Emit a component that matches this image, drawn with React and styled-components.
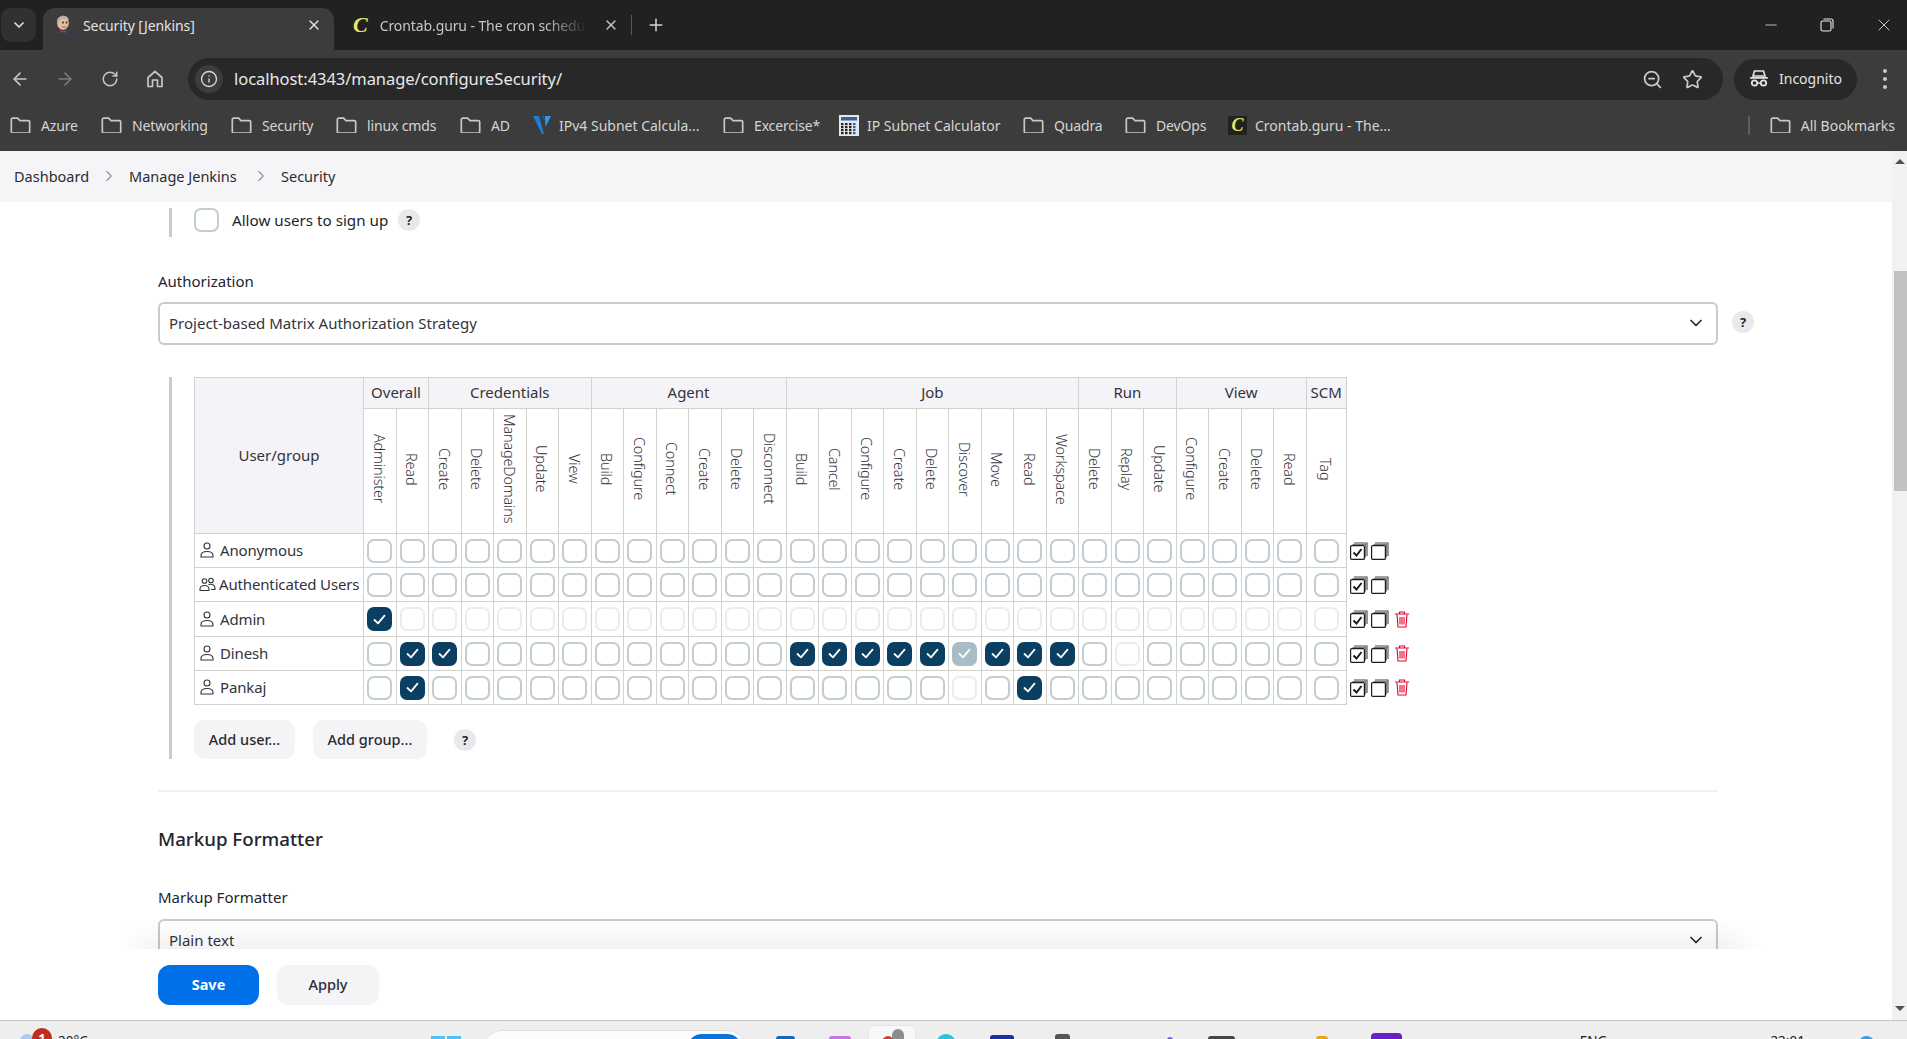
import React from 'react';
import styled, { createGlobalStyle } from 'styled-components';
import { ArrowLeft, ArrowRight, RotateCw, Info, ZoomOut, Star, X, Plus, ChevronDown, ChevronRight, Minus } from 'lucide-react';

const Global = createGlobalStyle`
  html, body { margin: 0; padding: 0; height: 100%; overflow: hidden; background: #fff; }
  * { box-sizing: border-box; }
  body { font-family: "Noto Sans", "Open Sans", sans-serif; color: #2b2b33; }
`;

const Shell = styled.div`height: 1039px; width: 1907px; display: flex; flex-direction: column; overflow: hidden;`;

/* browser chrome */
const TabBar = styled.div`height: 50px; background: #202221; display: flex; align-items: flex-end; flex: none; color: #e3e3e3; font-size: 14px;`;
const TabMenu = styled.div`width: 35px; height: 34px; margin: 0 7px 8px 1px; border-radius: 10px; background: #303231; display: flex; align-items: center; justify-content: center; flex: none;`;
const ActiveTab = styled.div`width: 291px; height: 42px; background: #3c3c3c; border-radius: 12px 12px 0 0; display: flex; align-items: center; padding: 0 12px 8px 11px; flex: none;`;
const InactiveTab = styled.div`width: 297px; height: 42px; display: flex; align-items: center; padding: 0 12px 8px 19px; flex: none; color: #c7c7c7;`;
const TabTitle = styled.span`flex: 1; margin-left: ${p => p.$gap}px; white-space: nowrap; overflow: hidden; letter-spacing: -0.1px; ${p => p.$fade ? 'mask-image: linear-gradient(90deg, #000 78%, transparent 98%); -webkit-mask-image: linear-gradient(90deg, #000 78%, transparent 98%);' : ''}`;
const TabSep = styled.div`width: 1px; height: 20px; background: #5a5a5a; margin: 0 14px 15px 0; flex: none; align-self: flex-end;`;
const NewTab = styled.div`display: flex; margin-bottom: 15px; flex: none; color: #d5d5d5;`;
const WinControls = styled.div`margin-left: auto; display: flex; align-items: center; height: 50px; color: #e8e8e8; padding-right: 13px; gap: 40px;`;

const Toolbar = styled.div`height: 50px; background: #3c3c3c; flex: none; display: flex; align-items: center; padding: 8px 0 0 8px; color: #c7c7c7;`;
const NavBtn = styled.div`width: 24px; height: 24px; margin-right: 21px; display: flex; align-items: center; justify-content: center; color: ${p => p.$dim ? '#7b7b7b' : '#c7c7c7'}; flex: none;`;
const AddressBar = styled.div`width: 1535px; height: 42px; border-radius: 21px; background: #282828; display: flex; align-items: center; padding: 0 20px 0 7px; flex: none;`;
const InfoBadge = styled.div`width: 28px; height: 28px; border-radius: 50%; background: #3c3c3c; display: flex; align-items: center; justify-content: center; color: #d8d8d8; flex: none;`;
const Url = styled.span`margin-left: 11px; font-size: 16.5px; color: #e8e8e8; letter-spacing: -0.05px; flex: 1; padding-bottom: 2px;`;
const AddressIcons = styled.div`display: flex; align-items: center; gap: 19px; color: #c7c7c7;`;
const IncognitoPill = styled.div`width: 123px; height: 41px; margin-left: 11px; border-radius: 21px; background: #282828; display: flex; align-items: center; padding: 0 0 1px 15px; gap: 10px; font-size: 14px; color: #e3e3e3; flex: none;`;
const Kebab = styled.div`margin-left: 26px; display: flex; flex-direction: column; gap: 4px; flex: none;`;
const KebabDot = styled.i`width: 4px; height: 4px; border-radius: 50%; background: #c7c7c7; display: block;`;

const Bookmarks = styled.div`height: 51px; background: #3c3c3c; flex: none; display: flex; align-items: center; padding: 0 12px 1px 10px; font-size: 14px; color: #d5d5d5; letter-spacing: -0.15px;`;
const Bookmark = styled.div`display: flex; align-items: center; gap: ${p => p.$gap ?? 10}px; white-space: nowrap; flex: none; width: ${p => p.$w}px; ${p => p.$wide ? 'letter-spacing: 0;' : ''}`;
const BookmarkSep = styled.div`width: 2px; height: 19px; background: #5e5e5e; margin-left: auto; margin-right: 20px; flex: none;`;
const Favicon = styled.div`width: 19px; height: 19px; background: #20221b; display: flex; align-items: center; justify-content: center; flex: none;`;
const CLetter = styled.span`font-family: "Liberation Serif", serif; font-style: italic; font-weight: 700; color: #e9e66a; font-size: ${p => p.$size}px; line-height: 1; letter-spacing: 0;`;

/* page */
const Middle = styled.div`flex: 1; min-height: 0; display: flex;`;
const Page = styled.div`flex: 1; min-width: 0; display: flex; flex-direction: column; background: #fff;`;
const Breadcrumb = styled.nav`height: 51px; background: #f5f5f7; flex: none; display: flex; align-items: center; padding: 0 0 2px 14px; font-size: 14.5px; color: #2b2b33; font-weight: 400;`;
const Crumb = styled.span`width: ${p => p.$w}px; white-space: nowrap;`;
const CrumbSep = styled.span`display: flex; color: #8f8f97; width: 40px; justify-content: center; flex: none;`;
const Content = styled.div`flex: 1; min-height: 0; overflow: hidden; padding-left: 158px;`;
const Form = styled.div`width: 1596px;`;
const SignupIndent = styled.div`margin: 6px 0 0 11px; height: 29px; border-left: 3px solid #c3ced4; padding: 0 0 5px 22px; display: flex; align-items: center;`;
const SignupLabel = styled.span`margin-left: 13px; padding-bottom: 1px; font-size: 15.2px; font-weight: 400; color: #24242c; width: 166px; white-space: nowrap;`;
const Help = styled.span`width: 22px; height: 22px; margin-top: ${p => p.$mt ?? 0}px; border-radius: 50%; background: #e9e9ec; color: #26262e; font-size: 13px; font-weight: 700; display: flex; align-items: center; justify-content: center; flex: none;`;
const FieldLabel = styled.div`font-size: 15px; font-weight: 400; line-height: 18px; height: ${p => p.$h ?? 20}px; margin-top: ${p => p.$mt}px; color: #24242c;`;
const SelectRow = styled.div`display: flex; align-items: center; gap: 14px; margin-top: 10px; padding-right: ${p => p.$pr ?? 0}px;`;
const Select = styled.div`flex: 1; height: 43px; border: 2px solid #c1ccd3; border-radius: 6px; display: flex; align-items: center; justify-content: space-between; padding: 0 10px 2px 9px; font-size: 15px; color: #33333b; background: #fff;`;
const MatrixIndent = styled.div`margin: 32px 0 0 11px; border-left: 3px solid #c3ced4; padding-left: 22px;`;
const Matrix = styled.table`border-collapse: collapse; table-layout: fixed; width: 1210px; font-size: 15px; color: #33333b;`;
const GroupHead = styled.th`height: 31px; background: #f3f3f8; border: 1px solid #d2d2ce; font-weight: 400; font-size: 15px; padding: 0 0 2px; text-align: center;`;
const UserHead = styled(GroupHead)`padding-bottom: 2px;`;
const PermHead = styled.th`height: 125px; border: 1px solid #d2d2ce; font-weight: 300; font-size: 14.5px; padding: 0; vertical-align: middle;`;
const PermText = styled.span`writing-mode: vertical-rl; display: inline-block; white-space: nowrap; letter-spacing: -0.2px; line-height: 18px;`;
const Row = styled.tr`height: ${p => p.$h}px;`;
const NameCell = styled.td`border: 1px solid #d2d2ce; padding: 0 0 0 ${p => p.$pl}px; white-space: nowrap; overflow: hidden;`;
const NameInner = styled.div`display: flex; align-items: center; gap: ${p => p.$gap}px; letter-spacing: -0.15px; line-height: 18px; padding-bottom: 1px;`;
const BoxCell = styled.td`border: 1px solid #d2d2ce; padding: 0; text-align: center;`;
const ActionCell = styled.td`padding: 0 0 0 3px;`;
const Actions = styled.div`display: flex; align-items: center; gap: 3px;`;
const boxColors = {
  off: 'background:#fff;border:2px solid #c2ccd3;',
  dis: 'background:#fff;border:2px solid #e9edf1;',
  on: 'background:#0b3f61;border:2px solid #0b3f61;',
  ondis: 'background:#a9bcc7;border:2px solid #a9bcc7;',
};
const Box = styled.span`width: 25px; height: 24px; border-radius: 7px; display: inline-flex; align-items: center; justify-content: center; vertical-align: middle; flex: none; ${p => boxColors[p.$state]}`;
const ButtonRow = styled.div`display: flex; align-items: center; margin-top: 15px; height: 39px;`;
const SoftButton = styled.div`width: ${p => p.$w}px; height: ${p => p.$h ?? 39}px; margin-left: ${p => p.$ml ?? 0}px; padding-bottom: 2px; background: #f4f4f6; border-radius: 11px; display: flex; align-items: center; justify-content: center; font-size: 14.5px; font-weight: 500; color: #2b2b33; flex: none;`;
const HelpGap = styled.span`margin-left: 27px; display: flex;`;
const Divider = styled.div`height: 2px; background: #f2f2f6; margin: 31px 36px 0 0;`;
const Heading = styled.h2`margin: 35px 0 0; font-size: 18.7px; line-height: 24px; height: 26px; font-weight: 500; color: #24242c;`;

const SaveBar = styled.div`position: relative; height: 71px; flex: none; background: #fff; display: flex; padding: 16px 0 0 158px; gap: 18px;
  &::before { content: ""; position: absolute; left: 120px; right: 130px; top: -30px; height: 30px; background: linear-gradient(180deg, rgba(0,0,0,0), rgba(0,0,0,.05)); pointer-events: none;
    mask-image: linear-gradient(90deg, transparent, #000 40px, #000 calc(100% - 40px), transparent); -webkit-mask-image: linear-gradient(90deg, transparent, #000 40px, #000 calc(100% - 40px), transparent); }
`;
const SaveButton = styled.div`width: 101px; height: 40px; padding-bottom: 2px; border-radius: 12px; background: #0070e8; color: #fff; font-weight: 700; font-size: 14.5px; display: flex; align-items: center; justify-content: center;`;

const ScrollTrack = styled.div`width: 15px; flex: none; background: #f1f1f1; display: flex; flex-direction: column; align-items: flex-end; padding-top: 8px;`;
const ArrowUp = styled.i`width: 0; height: 0; border-left: 5px solid transparent; border-right: 5px solid transparent; border-bottom: 5px solid #505050; margin-right: 2px; flex: none; display: block;`;
const ArrowDown = styled.i`width: 0; height: 0; border-left: 5px solid transparent; border-right: 5px solid transparent; border-top: 5px solid #505050; margin: auto 2px 9px 0; flex: none; display: block;`;
const Thumb = styled.div`width: 13px; height: 220px; background: #c1c1c1; margin-top: 107px; flex: none;`;

/* taskbar */
const Taskbar = styled.div`height: 19px; flex: none; background: #eeeeee; border-top: 1px solid #c4c4c4; display: flex; align-items: flex-start; overflow: hidden;`;
const TaskItem = styled.div`width: ${p => p.$w}px; height: 30px; margin-left: ${p => p.$ml}px; margin-top: ${p => p.$top}px; background: ${p => p.$color}; border-radius: ${p => p.$r ?? 3}px; flex: none;`;
const Badge = styled.div`width: 20px; height: 20px; border-radius: 50%; background: #c42b1c; color: #fff; font-size: 13px; font-weight: 700; text-align: center; line-height: 20px; margin: 7px 0 0 -2px; flex: none;`;
const TaskText = styled.span`font-size: 13.5px; color: #222; margin-left: ${p => p.$ml}px; margin-top: ${p => p.$top}px; white-space: nowrap; flex: none; line-height: 18px;`;
const WinLogo = styled.div`display: flex; gap: 2px; margin: 15px 0 0 343px; flex: none;`;
const WinPane = styled.i`width: 14px; height: 14px; background: #4cc2ff; display: block;`;
const SearchBox = styled.div`width: 265px; height: 40px; margin: 9px 0 0 21px; background: #fbfbfb; border: 1px solid #e0e0e0; border-radius: 20px; flex: none; display: flex; justify-content: flex-end; padding: 3px 4px 0 0;`;
const SearchPill = styled.i`width: 55px; height: 30px; background: #0a74da; border-radius: 15px; display: block;`;
const ActiveTile = styled.div`width: 48px; height: 40px; margin: 4px 0 0 17px; background: #f8f8f8; border: 1px solid #e6e6e6; border-radius: 5px; flex: none; display: flex; justify-content: center; padding-top: 3px;`;
const TileRed = styled.i`width: 16px; height: 24px; border-radius: 50%; background: #d93a2b; margin-top: 7px; display: block;`;
const TileGray = styled.i`width: 12px; height: 24px; border-radius: 6px 6px 0 0; background: #8c8c8c; margin-left: -4px; display: block;`;

const Folder = ({ size = 21 }) => (
  <svg width={size} height={size * 0.8} viewBox="0 0 21 17" fill="none" stroke="#c8c8c8" strokeWidth="1.7" style={{ flex: 'none' }}>
    <path d="M1.2 2.6a1.4 1.4 0 0 1 1.4-1.4h5l2.3 2.4h8.5a1.4 1.4 0 0 1 1.4 1.4v10a1.4 1.4 0 0 1-1.4 1.4H2.6a1.4 1.4 0 0 1-1.4-1.4z" />
  </svg>
);
const Jenkins = () => (
  <svg width="18" height="20" viewBox="0 0 18 20" style={{ flex: 'none' }}>
    <path d="M1 20c0-4 2-6 4-6h8c2 0 4 2 4 6z" fill="#2f3f52" />
    <ellipse cx="9" cy="8" rx="6.200" ry="7.200" fill="#e2bda0" stroke="#4a3a30" strokeWidth=".7" />
    <path d="M3 7C3 3 6 .8 9.500 .8c3 0 5 2 5.500 4.500-3-2-8-2-9 0-.8 1.500-1 3-2.500 1.700z" fill="#b9b2a8" />
    <circle cx="9" cy="7.500" r=".9" fill="#222" /><circle cx="12.500" cy="7.500" r=".9" fill="#222" />
    <path d="M8 11.500c1.500 1 3 1 4.500 0" stroke="#8d5a44" strokeWidth=".9" fill="none" />
    <path d="M6 15l3 1.500 3-1.500v3l-3-1-3 1z" fill="#d7252b" />
  </svg>
);
const Home = () => (
  <svg width="20" height="20" viewBox="0 0 20 20" fill="none" stroke="#c7c7c7" strokeWidth="1.7">
    <path d="M3 8.500 10 2.500l7 6V17.500h-4.500V11h-5v6.500H3z" strokeLinejoin="round" />
  </svg>
);
const Incognito = () => (
  <svg width="20" height="18" viewBox="0 0 20 18" fill="#e3e3e3" style={{ flex: 'none' }}>
    <path d="M5.500 1h9l1.500 5H4z" fill="none" stroke="#e3e3e3" strokeWidth="1.600" />
    <rect x="1" y="7" width="18" height="1.800" rx=".9" />
    <circle cx="5.500" cy="13" r="2.700" fill="none" stroke="#e3e3e3" strokeWidth="1.800" />
    <circle cx="14.500" cy="13" r="2.700" fill="none" stroke="#e3e3e3" strokeWidth="1.800" />
    <path d="M8.200 13h3.600" stroke="#e3e3e3" strokeWidth="1.500" />
  </svg>
);
const Restore = () => (
  <svg width="14" height="14" viewBox="0 0 14 14" fill="none" stroke="#e8e8e8" strokeWidth="1.100">
    <rect x="1" y="3" width="10" height="10" rx="1.800" />
    <path d="M3.500 1h7.500a2 2 0 0 1 2 2v7.500" />
  </svg>
);
const VLogo = () => (
  <svg width="20" height="20" viewBox="0 0 20 20" style={{ flex: 'none' }}>
    <path d="M1 1h6l5 18h-2z" fill="#1c7fd9" />
    <path d="M8.500 1H12l1.500 5z" fill="#0f5fb0" />
    <path d="M13 1h6l-5.500 11z" fill="#2f9bf0" />
  </svg>
);
const Calc = () => (
  <svg width="20" height="21" viewBox="0 0 20 21" style={{ flex: 'none' }}>
    <rect width="20" height="21" fill="#e8e8e8" />
    <rect x="2" y="2" width="16" height="3.500" fill="#2f64a8" />
    {[8, 11, 14, 17].flatMap(y => [2, 6, 10, 14].map(x => (
      <rect key={`${x}-${y}`} x={x} y={y} width="2.500" height="2.200" fill={x === 14 ? '#2f64a8' : '#222'} />
    )))}
  </svg>
);
const Person = () => (
  <svg width="14" height="16" viewBox="0 0 14 16" fill="none" stroke="#33333b" strokeWidth="1.100" style={{ flex: 'none' }}>
    <circle cx="7" cy="4" r="3" />
    <path d="M1 15v-1.500C1 11 3.500 9.500 7 9.500s6 1.500 6 4V15z" />
  </svg>
);
const People = () => (
  <svg width="17" height="15" viewBox="0 0 17 15" fill="none" stroke="#33333b" strokeWidth="1.100" style={{ flex: 'none' }}>
    <circle cx="5.500" cy="4" r="2.300" /><circle cx="12" cy="3.500" r="2.300" />
    <path d="M1 13.500v-1.500c0-2 2-3.500 4.500-3.500S10 10 10 12v1.500z" />
    <path d="M9.500 7.500c3-.8 6.500.3 6.500 3.500v1.500h-4" />
  </svg>
);
const Tick = () => (
  <svg width="13" height="11" viewBox="0 0 13 11" fill="none" stroke="#fff" strokeWidth="1.800" strokeLinecap="round" strokeLinejoin="round">
    <path d="M1.500 6 5 9.300 11.500 1.700" />
  </svg>
);
const StackIcon = ({ checked }) => (
  <svg width="18" height="18" viewBox="0 0 18 18" fill="none" style={{ flex: 'none' }}>
    <path d="M4 1h13v13" stroke="#44444c" strokeWidth="1.100" />
    <path d="M2.500 2.500H15.500V15.500" stroke="#77777c" strokeWidth="1.100" />
    <rect x=".6" y="3.600" width="13.800" height="13.800" rx="1" fill="#fff" stroke="#1c1c24" strokeWidth="1.200" />
    {checked && <path d="M3.500 10.500 6.500 13.500 11.500 7" stroke="#1c1c24" strokeWidth="2" />}
  </svg>
);
const Trash = () => (
  <svg width="14" height="17" viewBox="0 0 14 17" fill="none" stroke="#e6002d" strokeWidth="1.100" style={{ flex: 'none', marginLeft: 3 }}>
    <path d="M0 3h14M4.500 3V1h5v2" />
    <path d="M2 3.500 3 16h8l1-12.500" />
    <path d="M5 6v7.500M7 6v7.500M9 6v7.500" />
  </svg>
);

const groups = [
  ['Overall', ['Administer', 'Read']],
  ['Credentials', ['Create', 'Delete', 'ManageDomains', 'Update', 'View']],
  ['Agent', ['Build', 'Configure', 'Connect', 'Create', 'Delete', 'Disconnect']],
  ['Job', ['Build', 'Cancel', 'Configure', 'Create', 'Delete', 'Discover', 'Move', 'Read', 'Workspace']],
  ['Run', ['Delete', 'Replay', 'Update']],
  ['View', ['Configure', 'Create', 'Delete', 'Read']],
  ['SCM', ['Tag']],
];
const perms = groups.flatMap(g => g[1]);
const fill = (over) => perms.map((_, i) => over(i));
const users = [
  { name: 'Anonymous', h: 34, states: fill(() => 'off'), removable: false },
  { name: 'Authenticated Users', h: 34, group: true, states: fill(() => 'off'), removable: false },
  { name: 'Admin', h: 35, states: fill(i => (i === 0 ? 'on' : 'dis')), removable: true },
  { name: 'Dinesh', h: 34, states: fill(i => {
    if ([1, 2, 13, 14, 15, 16, 17, 19, 20, 21].includes(i)) return 'on';
    if (i === 18) return 'ondis';
    if (i === 23) return 'dis';
    return 'off';
  }), removable: true },
  { name: 'Pankaj', h: 34, states: fill(i => {
    if (i === 1 || i === 20) return 'on';
    if (i === 18) return 'dis';
    return 'off';
  }), removable: true },
];
const taskIcons = [
  { w: 19, ml: 29, top: 15, color: '#0f6cbd' },
  { w: 22, ml: 34, top: 15, color: '#c774e8' },
];
const taskIconsAfter = [
  { w: 20, ml: 20, top: 13, color: '#2bc4d8', r: 10 },
  { w: 24, ml: 34, top: 14, color: '#1a2fa0' },
  { w: 15, ml: 41, top: 13, color: '#555' },
  { w: 6, ml: 97, top: 16, color: '#7a5de8' },
  { w: 27, ml: 35, top: 15, color: '#444' },
  { w: 12, ml: 81, top: 15, color: '#e8a70c' },
  { w: 31, ml: 43, top: 12, color: '#6a1fc8', r: 4 },
];

const App = () => (
  <Shell>
    <Global />
    <TabBar>
      <TabMenu><ChevronDown size={16} strokeWidth={2.5} color="#e3e3e3" /></TabMenu>
      <ActiveTab>
        <Jenkins />
        <TabTitle $gap={11}>Security [Jenkins]</TabTitle>
        <X size={16} strokeWidth={2} />
      </ActiveTab>
      <InactiveTab>
        <CLetter $size={22}>C</CLetter>
        <TabTitle $gap={12} $fade>Crontab.guru - The cron schedule expression editor</TabTitle>
        <X size={16} strokeWidth={2} style={{ marginLeft: 12 }} />
      </InactiveTab>
      <TabSep />
      <NewTab><Plus size={20} strokeWidth={1.8} /></NewTab>
      <WinControls>
        <Minus size={18} strokeWidth={1} />
        <Restore />
        <X size={20} strokeWidth={1} />
      </WinControls>
    </TabBar>
    <Toolbar>
      <NavBtn><ArrowLeft size={20} strokeWidth={2} /></NavBtn>
      <NavBtn $dim><ArrowRight size={20} strokeWidth={2} /></NavBtn>
      <NavBtn><RotateCw size={18} strokeWidth={2} /></NavBtn>
      <NavBtn><Home /></NavBtn>
      <AddressBar>
        <InfoBadge><Info size={18} strokeWidth={1.8} /></InfoBadge>
        <Url>localhost:4343/manage/configureSecurity/</Url>
        <AddressIcons>
          <ZoomOut size={21} strokeWidth={2} />
          <Star size={21} strokeWidth={2} />
        </AddressIcons>
      </AddressBar>
      <IncognitoPill><Incognito />Incognito</IncognitoPill>
      <Kebab><KebabDot /><KebabDot /><KebabDot /></Kebab>
    </Toolbar>
    <Bookmarks>
      <Bookmark $w={91}><Folder />Azure</Bookmark>
      <Bookmark $w={130}><Folder />Networking</Bookmark>
      <Bookmark $w={105}><Folder />Security</Bookmark>
      <Bookmark $w={124}><Folder />linux cmds</Bookmark>
      <Bookmark $w={72}><Folder />AD</Bookmark>
      <Bookmark $w={191} $gap={7} $wide><VLogo />IPv4 Subnet Calcula...</Bookmark>
      <Bookmark $w={116}><Folder />Excercise*</Bookmark>
      <Bookmark $w={184} $gap={8} $wide><Calc />IP Subnet Calculator</Bookmark>
      <Bookmark $w={102}><Folder />Quadra</Bookmark>
      <Bookmark $w={103}><Folder />DevOps</Bookmark>
      <Bookmark $gap={8} $wide><Favicon><CLetter $size={18}>C</CLetter></Favicon>Crontab.guru - The...</Bookmark>
      <BookmarkSep />
      <Bookmark $wide><Folder />All Bookmarks</Bookmark>
    </Bookmarks>
    <Middle>
      <Page>
        <Breadcrumb>
          <Crumb $w={75}>Dashboard</Crumb>
          <CrumbSep><ChevronRight size={18} strokeWidth={1.5} /></CrumbSep>
          <Crumb $w={112}>Manage Jenkins</Crumb>
          <CrumbSep><ChevronRight size={18} strokeWidth={1.5} /></CrumbSep>
          <Crumb>Security</Crumb>
        </Breadcrumb>
        <Content>
          <Form>
            <SignupIndent>
              <Box $state="off" />
              <SignupLabel>Allow users to sign up</SignupLabel>
              <Help>?</Help>
            </SignupIndent>
            <FieldLabel $mt={35}>Authorization</FieldLabel>
            <SelectRow>
              <Select>Project-based Matrix Authorization Strategy<ChevronDown size={20} strokeWidth={2} color="#24242c" /></Select>
              <Help $mt={-4}>?</Help>
            </SelectRow>
            <MatrixIndent>
              <Matrix>
                <colgroup>
                  <col style={{ width: 169 }} />
                  {perms.map((p, i) => <col key={i} style={{ width: i === 29 ? 40 : 32.5 }} />)}
                  <col style={{ width: 64 }} />
                </colgroup>
                <thead>
                  <tr>
                    <UserHead rowSpan={2}>User/group</UserHead>
                    {groups.map(([name, list]) => <GroupHead key={name} colSpan={list.length}>{name}</GroupHead>)}
                  </tr>
                  <tr>
                    {perms.map((p, i) => <PermHead key={i}><PermText>{p}</PermText></PermHead>)}
                  </tr>
                </thead>
                <tbody>
                  {users.map(u => (
                    <Row key={u.name} $h={u.h}>
                      <NameCell $pl={u.group ? 4 : 5}>
                        <NameInner $gap={u.group ? 3 : 6}>{u.group ? <People /> : <Person />}{u.name}</NameInner>
                      </NameCell>
                      {u.states.map((s, i) => (
                        <BoxCell key={i}><Box $state={s}>{(s === 'on' || s === 'ondis') && <Tick />}</Box></BoxCell>
                      ))}
                      <ActionCell>
                        <Actions>
                          <StackIcon checked />
                          <StackIcon />
                          {u.removable && <Trash />}
                        </Actions>
                      </ActionCell>
                    </Row>
                  ))}
                </tbody>
              </Matrix>
              <ButtonRow>
                <SoftButton $w={101}>Add user...</SoftButton>
                <SoftButton $w={114} $ml={18}>Add group...</SoftButton>
                <HelpGap><Help>?</Help></HelpGap>
              </ButtonRow>
            </MatrixIndent>
            <Divider />
            <Heading>Markup Formatter</Heading>
            <FieldLabel $mt={35} $h={21}>Markup Formatter</FieldLabel>
            <SelectRow $pr={36}>
              <Select>Plain text<ChevronDown size={20} strokeWidth={2} color="#24242c" /></Select>
            </SelectRow>
          </Form>
        </Content>
        <SaveBar>
          <SaveButton>Save</SaveButton>
          <SoftButton $w={102} $h={40}>Apply</SoftButton>
        </SaveBar>
      </Page>
      <ScrollTrack>
        <ArrowUp />
        <Thumb />
        <ArrowDown />
      </ScrollTrack>
    </Middle>
    <Taskbar>
      <TaskItem $w={14} $ml={20} $top={13} $color="#a9c9ee" $r={7} />
      <Badge>1</Badge>
      <TaskText $ml={6} $top={11}>20°C</TaskText>
      <WinLogo><WinPane /><WinPane /></WinLogo>
      <SearchBox><SearchPill /></SearchBox>
      {taskIcons.map((t, i) => <TaskItem key={i} $w={t.w} $ml={t.ml} $top={t.top} $color={t.color} />)}
      <ActiveTile><TileRed /><TileGray /></ActiveTile>
      {taskIconsAfter.map((t, i) => <TaskItem key={i} $w={t.w} $ml={t.ml} $top={t.top} $color={t.color} $r={t.r} />)}
      <TaskText $ml={178} $top={11}>ENG</TaskText>
      <TaskText $ml={163} $top={11}>22:01</TaskText>
      <TaskItem $w={15} $ml={54} $top={15} $color="#3aa0e8" $r={7} />
    </Taskbar>
  </Shell>
);

export default App;
